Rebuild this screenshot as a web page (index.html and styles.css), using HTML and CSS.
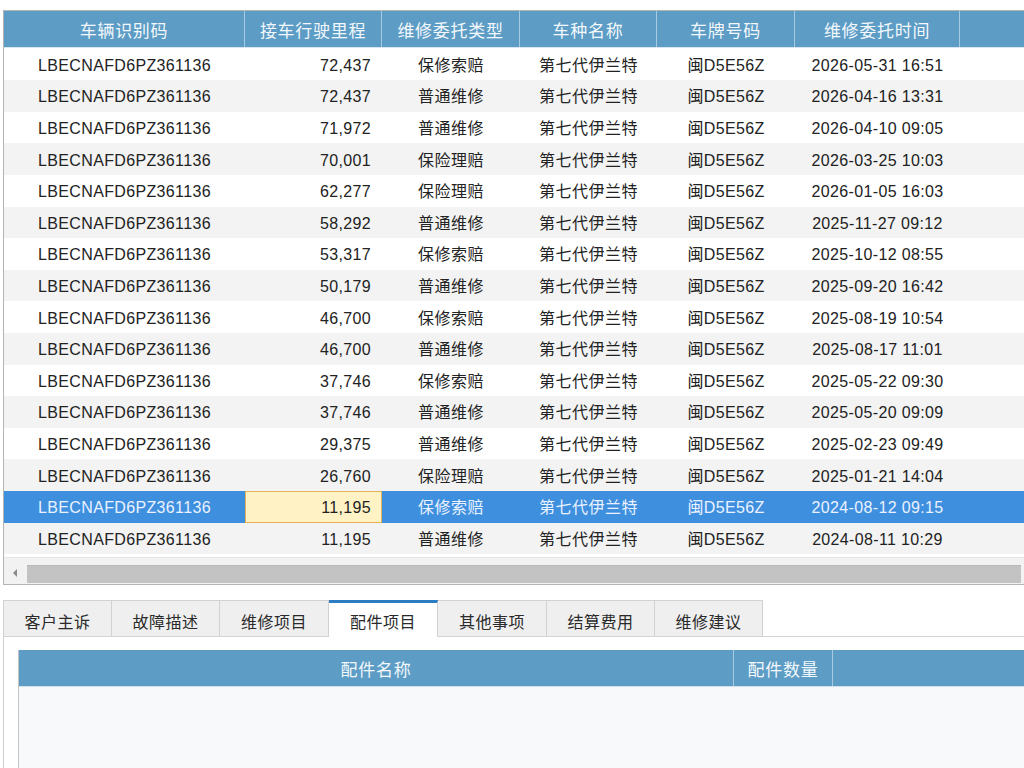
FILE: index.html
```html
<!DOCTYPE html>
<html lang="zh-CN">
<head>
<meta charset="utf-8">
<title>维修记录</title>
<link rel="stylesheet" href="styles.css">
</head>
<body>
<div class="grid">
  <div class="row head">
    <div class="hc">车辆识别码</div>
    <div class="hc">接车行驶里程</div>
    <div class="hc">维修委托类型</div>
    <div class="hc">车种名称</div>
    <div class="hc">车牌号码</div>
    <div class="hc">维修委托时间</div>
    <div class="hc last"></div>
  </div>
  <div class="rows">
    <div class="row"><div class="c">LBECNAFD6PZ361136</div><div class="c num">72,437</div><div class="c cjk">保修索赔</div><div class="c cjk">第七代伊兰特</div><div class="c">闽D5E56Z</div><div class="c">2026-05-31 16:51</div><div class="c"></div></div>
    <div class="row"><div class="c">LBECNAFD6PZ361136</div><div class="c num">72,437</div><div class="c cjk">普通维修</div><div class="c cjk">第七代伊兰特</div><div class="c">闽D5E56Z</div><div class="c">2026-04-16 13:31</div><div class="c"></div></div>
    <div class="row"><div class="c">LBECNAFD6PZ361136</div><div class="c num">71,972</div><div class="c cjk">普通维修</div><div class="c cjk">第七代伊兰特</div><div class="c">闽D5E56Z</div><div class="c">2026-04-10 09:05</div><div class="c"></div></div>
    <div class="row"><div class="c">LBECNAFD6PZ361136</div><div class="c num">70,001</div><div class="c cjk">保险理赔</div><div class="c cjk">第七代伊兰特</div><div class="c">闽D5E56Z</div><div class="c">2026-03-25 10:03</div><div class="c"></div></div>
    <div class="row"><div class="c">LBECNAFD6PZ361136</div><div class="c num">62,277</div><div class="c cjk">保险理赔</div><div class="c cjk">第七代伊兰特</div><div class="c">闽D5E56Z</div><div class="c">2026-01-05 16:03</div><div class="c"></div></div>
    <div class="row"><div class="c">LBECNAFD6PZ361136</div><div class="c num">58,292</div><div class="c cjk">普通维修</div><div class="c cjk">第七代伊兰特</div><div class="c">闽D5E56Z</div><div class="c">2025-11-27 09:12</div><div class="c"></div></div>
    <div class="row"><div class="c">LBECNAFD6PZ361136</div><div class="c num">53,317</div><div class="c cjk">保修索赔</div><div class="c cjk">第七代伊兰特</div><div class="c">闽D5E56Z</div><div class="c">2025-10-12 08:55</div><div class="c"></div></div>
    <div class="row"><div class="c">LBECNAFD6PZ361136</div><div class="c num">50,179</div><div class="c cjk">普通维修</div><div class="c cjk">第七代伊兰特</div><div class="c">闽D5E56Z</div><div class="c">2025-09-20 16:42</div><div class="c"></div></div>
    <div class="row"><div class="c">LBECNAFD6PZ361136</div><div class="c num">46,700</div><div class="c cjk">保修索赔</div><div class="c cjk">第七代伊兰特</div><div class="c">闽D5E56Z</div><div class="c">2025-08-19 10:54</div><div class="c"></div></div>
    <div class="row"><div class="c">LBECNAFD6PZ361136</div><div class="c num">46,700</div><div class="c cjk">普通维修</div><div class="c cjk">第七代伊兰特</div><div class="c">闽D5E56Z</div><div class="c">2025-08-17 11:01</div><div class="c"></div></div>
    <div class="row"><div class="c">LBECNAFD6PZ361136</div><div class="c num">37,746</div><div class="c cjk">保修索赔</div><div class="c cjk">第七代伊兰特</div><div class="c">闽D5E56Z</div><div class="c">2025-05-22 09:30</div><div class="c"></div></div>
    <div class="row"><div class="c">LBECNAFD6PZ361136</div><div class="c num">37,746</div><div class="c cjk">普通维修</div><div class="c cjk">第七代伊兰特</div><div class="c">闽D5E56Z</div><div class="c">2025-05-20 09:09</div><div class="c"></div></div>
    <div class="row"><div class="c">LBECNAFD6PZ361136</div><div class="c num">29,375</div><div class="c cjk">普通维修</div><div class="c cjk">第七代伊兰特</div><div class="c">闽D5E56Z</div><div class="c">2025-02-23 09:49</div><div class="c"></div></div>
    <div class="row"><div class="c">LBECNAFD6PZ361136</div><div class="c num">26,760</div><div class="c cjk">保险理赔</div><div class="c cjk">第七代伊兰特</div><div class="c">闽D5E56Z</div><div class="c">2025-01-21 14:04</div><div class="c"></div></div>
    <div class="row sel"><div class="c">LBECNAFD6PZ361136</div><div class="c num focus">11,195</div><div class="c cjk">保修索赔</div><div class="c cjk">第七代伊兰特</div><div class="c">闽D5E56Z</div><div class="c">2024-08-12 09:15</div><div class="c"></div></div>
    <div class="row"><div class="c">LBECNAFD6PZ361136</div><div class="c num">11,195</div><div class="c cjk">普通维修</div><div class="c cjk">第七代伊兰特</div><div class="c">闽D5E56Z</div><div class="c">2024-08-11 10:29</div><div class="c"></div></div>
  </div>
  <div class="hscroll">
    <span class="arrow"></span>
    <div class="thumb"></div>
  </div>
</div>

<div class="tabs">
  <div class="tab">客户主诉</div>
  <div class="tab narrow">故障描述</div>
  <div class="tab">维修项目</div>
  <div class="tab active">配件项目</div>
  <div class="tab">其他事项</div>
  <div class="tab narrow">结算费用</div>
  <div class="tab narrow">维修建议</div>
  <div class="tab-fill"></div>
</div>
<div class="panel">
  <div class="subgrid">
    <div class="subhead">
      <div class="hc">配件名称</div>
      <div class="hc">配件数量</div>
      <div class="hc last"></div>
    </div>
    <div class="subbody"></div>
  </div>
</div>
</body>
</html>
```

FILE: styles.css
```css
html, body {
  margin: 0;
  padding: 0;
  background: #ffffff;
  overflow: hidden;
  width: 1024px;
  height: 768px;
}
body {
  padding-top: 10px;
  box-sizing: border-box;
  font-family: "Liberation Sans", "Noto Sans CJK SC", sans-serif;
  color: #222;
}
.grid {
  margin-left: 3px;
  width: 1040px;
  border: 1px solid #b4b4b4;
  background: #fff;
}
.row {
  display: grid;
  grid-template-columns: 241px 137px 138px 137px 138px 165px 1fr;
  height: 31.6px;
}
.row.head {
  height: 36px;
  background: #5c9cc5;
  border-bottom: 1px solid #d8e6ef;
  margin-bottom: 0.6px;
}
.hc {
  display: flex;
  align-items: center;
  justify-content: center;
  color: #f3f8fc;
  font-family: "Noto Sans CJK SC", sans-serif;
  font-size: 17px;
  letter-spacing: 0.7px;
  line-height: 20px;
  border-right: 1px solid #a6cbe2;
  padding-top: 2px;
  box-sizing: border-box;
}
.hc.last {
  border-right: none;
}
.rows .row:nth-child(even) {
  background: #f3f3f3;
}
.c {
  display: flex;
  align-items: center;
  justify-content: center;
  font-size: 16px;
  letter-spacing: 0.35px;
  line-height: 20px;
  padding-top: 3px;
  box-sizing: border-box;
  white-space: nowrap;
}
.c.cjk {
  letter-spacing: 0.5px;
}
.c.num {
  justify-content: flex-end;
  padding-right: 11px;
}
.rows .row.sel {
  background: #3f8fdf;
}
.row.sel .c {
  color: #eaf2ff;
}
.row.sel .c.focus {
  background: #fff3c6;
  border: 1px solid #e5b25c;
  color: #222;
  padding-top: 2px;
  padding-right: 10px;
}
.hscroll {
  margin-top: 3px;
  height: 27px;
  background: #f2f2f2;
  border-top: 1px solid #e6e6e6;
  display: flex;
  align-items: center;
  box-sizing: border-box;
}
.arrow {
  width: 0;
  height: 0;
  border-top: 4px solid transparent;
  border-bottom: 4px solid transparent;
  border-right: 4px solid #8a8a8a;
  margin-left: 9px;
  margin-right: 10px;
  margin-top: 3px;
}
.thumb {
  width: 994px;
  height: 18px;
  margin-top: 5px;
  background: #c3c3c3;
  border-top: 1px solid #b8b8b8;
  box-sizing: border-box;
}
.tabs {
  display: flex;
  margin-top: 15px;
  margin-left: 3px;
  height: 37px;
}
.tab {
  width: 109px;
  box-sizing: border-box;
  background: #efefef;
  border: 1px solid #d2d2d2;
  border-left: none;
  display: flex;
  align-items: center;
  justify-content: center;
  font-family: "Noto Sans CJK SC", sans-serif;
  font-size: 16px;
  letter-spacing: 0.5px;
  color: #2a2a2a;
  padding-top: 4px;
}
.tab.narrow {
  width: 108px;
}
.tab:first-child {
  border-left: 1px solid #d2d2d2;
}
.tab.active {
  background: #ffffff;
  border-top: 3px solid #2c7cc3;
  border-bottom-color: #ffffff;
  padding-top: 2px;
}
.tab-fill {
  flex: 1;
  border-bottom: 1px solid #d2d2d2;
}
.panel {
  margin-left: 3px;
  border-left: 1px solid #cfcfcf;
  padding: 13px 0 0 14px;
  height: 118px;
  background: #fff;
}
.subgrid {
  border-left: 1px solid #c4c4c4;
  width: 1020px;
  height: 100%;
  display: flex;
  flex-direction: column;
}
.subhead {
  display: grid;
  grid-template-columns: 715px 99px 1fr;
  height: 36px;
  background: #5c9cc5;
  border-bottom: 1px solid #cfe0ec;
}
.subbody {
  flex: 1;
  background: #f8f9fa;
}
```
